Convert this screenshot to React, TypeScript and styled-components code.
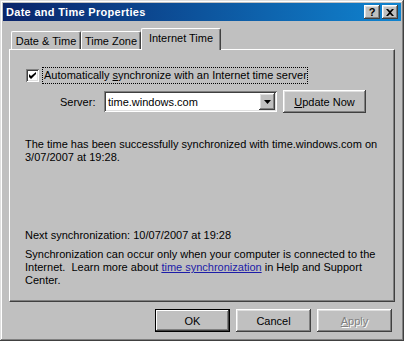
import styled, { createGlobalStyle, css } from "styled-components";

const GlobalStyle = createGlobalStyle`
  html, body {
    margin: 0;
    padding: 0;
    background: #c0c0c0;
  }
  * {
    box-sizing: border-box;
  }
`;

const raised = css`
  box-shadow: inset -1px -1px #404040, inset 1px 1px #ffffff,
    inset -2px -2px #808080, inset 2px 2px #dfdfdf;
`;

const sunken = css`
  box-shadow: inset 1px 1px #808080, inset -1px -1px #ffffff,
    inset 2px 2px #404040, inset -2px -2px #dfdfdf;
`;

const Window = styled.div`
  width: 404px;
  height: 341px;
  padding: 3px;
  background: #c0c0c0;
  font-family: "Liberation Sans", Arial, sans-serif;
  font-size: 11px;
  color: #000;
  display: flex;
  flex-direction: column;
  box-shadow: inset -1px -1px #404040, inset 1px 1px #dfdfdf,
    inset -2px -2px #808080, inset 2px 2px #ffffff;
`;

const TitleBar = styled.div`
  height: 18px;
  display: flex;
  align-items: center;
  padding: 0 3px 0 3px;
  background: linear-gradient(to right, #0a246a, #1084d0);
`;

const Title = styled.div`
  flex: 1;
  color: #fff;
  font-weight: bold;
  font-size: 11px;
  letter-spacing: 0.3px;
`;

const CaptionButton = styled.div<{ $gap?: boolean }>`
  width: 16px;
  height: 14px;
  background: #c0c0c0;
  ${raised};
  margin-left: ${(p) => (p.$gap ? "2px" : "0")};
  display: flex;
  align-items: center;
  justify-content: center;
  color: #000;
  font-weight: bold;
  font-size: 11px;
  line-height: 1;
`;

const Body = styled.div`
  flex: 1;
  display: flex;
  flex-direction: column;
  padding: 7px 6px 0 6px;
`;

const TabRow = styled.div`
  display: flex;
  align-items: flex-end;
  height: 21px;
  padding-left: 2px;
  position: relative;
  z-index: 1;
`;

const Tab = styled.div<{ $active?: boolean; $w: number }>`
  width: ${(p) => p.$w}px;
  height: ${(p) => (p.$active ? 22 : 18)}px;
  margin-bottom: ${(p) => (p.$active ? -1 : 0)}px;
  background: #c0c0c0;
  border-top: 1px solid #fff;
  border-left: 1px solid #fff;
  border-right: 1px solid #404040;
  border-radius: 2px 2px 0 0;
  box-shadow: inset -1px 0 #808080;
  display: flex;
  align-items: ${(p) => (p.$active ? "flex-start" : "center")};
  padding-top: ${(p) => (p.$active ? 3 : 0)}px;
  justify-content: center;
  font-size: 11px;
`;

const Panel = styled.div`
  height: 253px;
  background: #c0c0c0;
  border-top: 1px solid #fff;
  border-left: 1px solid #fff;
  border-right: 1px solid #404040;
  border-bottom: 1px solid #404040;
  box-shadow: inset -1px -1px #808080;
  padding: 0 0 0 15px;
  display: flex;
  flex-direction: column;
`;

const CheckRow = styled.div`
  margin-top: 17px;
  display: flex;
  align-items: center;
  height: 16px;
`;

const CheckBox = styled.div`
  width: 13px;
  height: 13px;
  margin-left: 1px;
  background: #fff;
  ${sunken};
  display: flex;
  align-items: center;
  justify-content: center;
`;

const FocusLabel = styled.span`
  margin-left: 4px;
  padding: 1px 0 1px 1px;
  outline: 1px dotted #000;
  line-height: 13px;
`;

const ServerRow = styled.div`
  margin-top: 7px;
  display: flex;
  align-items: center;
  height: 23px;
`;

const ServerLabel = styled.span`
  margin-left: 35px;
  width: 44px;
`;

const Combo = styled.div`
  width: 173px;
  height: 21px;
  background: #fff;
  ${sunken};
  display: flex;
  align-items: center;
  padding: 2px;
`;

const ComboText = styled.span`
  flex: 1;
  padding-left: 2px;
`;

const ComboArrow = styled.div`
  width: 16px;
  height: 17px;
  background: #c0c0c0;
  ${raised};
  display: flex;
  align-items: center;
  justify-content: center;
`;

const Button = styled.div<{ $default?: boolean; $disabled?: boolean; $w?: number }>`
  width: ${(p) => p.$w ?? 75}px;
  height: 23px;
  background: #c0c0c0;
  display: flex;
  align-items: center;
  justify-content: center;
  ${(p) =>
    p.$default
      ? css`
          box-shadow: inset 0 0 0 1px #000, inset -2px -2px #404040,
            inset 2px 2px #ffffff, inset -3px -3px #808080;
        `
      : raised};
  color: ${(p) => (p.$disabled ? "#808080" : "#000")};
  text-shadow: ${(p) => (p.$disabled ? "1px 1px #ffffff" : "none")};
`;

const UpdateButton = styled(Button)`
  margin-left: 6px;
`;

const Text = styled.div<{ $top: number }>`
  margin-top: ${(p) => p.$top}px;
  line-height: 13px;
  padding-right: 6px;
`;

const Link = styled.span`
  color: #1c1ca8;
  text-decoration: underline;
`;

const Footer = styled.div`
  display: flex;
  justify-content: flex-end;
  gap: 6px;
  padding: 7px 3px 0 0;
`;

const Key = styled.u`
  text-decoration: underline;
`;

export default function App() {
  return (
    <>
      <GlobalStyle />
      <Window>
        <TitleBar>
          <Title>Date and Time Properties</Title>
          <CaptionButton>?</CaptionButton>
          <CaptionButton $gap>
            <svg width="8" height="7" viewBox="0 0 8 7">
              <path d="M0 0h2l2 2 2-2h2L5 3.5 8 7H6L4 5 2 7H0l3-3.5z" fill="#000" />
            </svg>
          </CaptionButton>
        </TitleBar>
        <Body>
          <TabRow>
            <Tab $w={70}>Date &amp; Time</Tab>
            <Tab $w={60}>Time Zone</Tab>
            <Tab $w={80} $active>
              Internet Time
            </Tab>
          </TabRow>
          <Panel>
            <CheckRow>
              <CheckBox>
                <svg width="7" height="7" viewBox="0 0 7 7">
                  <path d="M0 2v3l2 2 5-5V-0L2 4z" fill="#000" />
                </svg>
              </CheckBox>
              <FocusLabel>
                Automatically <Key>s</Key>ynchronize with an Internet time server
              </FocusLabel>
            </CheckRow>
            <ServerRow>
              <ServerLabel>Server:</ServerLabel>
              <Combo>
                <ComboText>time.windows.com</ComboText>
                <ComboArrow>
                  <svg width="7" height="4" viewBox="0 0 7 4">
                    <path d="M0 0h7L3.5 4z" fill="#000" />
                  </svg>
                </ComboArrow>
              </Combo>
              <UpdateButton $w={83}>
                <span>
                  <Key>U</Key>pdate Now
                </span>
              </UpdateButton>
            </ServerRow>
            <Text $top={25}>
              The time has been successfully synchronized with time.windows.com on
              3/07/2007 at 19:28.
            </Text>
            <Text $top={65}>Next synchronization: 10/07/2007 at 19:28</Text>
            <Text $top={6}>
              Synchronization can occur only when your computer is connected to the
              Internet.&nbsp; Learn more about <Link>time synchronization</Link> in
              Help and Support Center.
            </Text>
          </Panel>
          <Footer>
            <Button $default>OK</Button>
            <Button>Cancel</Button>
            <Button $disabled>
              <span>
                <Key>A</Key>pply
              </span>
            </Button>
          </Footer>
        </Body>
      </Window>
    </>
  );
}
